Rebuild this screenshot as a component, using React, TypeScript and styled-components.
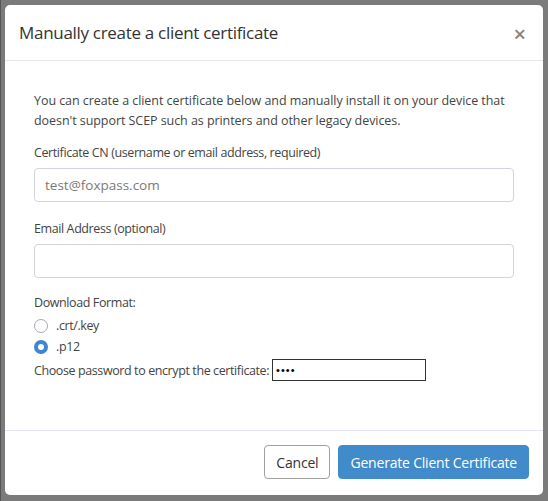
import styled, { createGlobalStyle } from 'styled-components';

const GlobalStyle = createGlobalStyle`
    html, body {
        margin: 0;
        padding: 0;
        background: #7b7b7b;
    }
    * {
        box-sizing: border-box;
    }
`;

const Backdrop = styled.div`
    width: 548px;
    height: 501px;
    padding: 5px 5px 6px 5px;
    background: #7b7b7b;
    border-left: 1px solid #555;
    font-family: 'Open Sans', 'Noto Sans', sans-serif;
    color: #444;
`;

const Modal = styled.div`
    width: 538px;
    height: 490px;
    margin-left: -1px;
    background: #fff;
    border-radius: 5px;
    display: flex;
    flex-direction: column;
`;

const Header = styled.div`
    height: 56px;
    display: flex;
    align-items: center;
    justify-content: space-between;
    padding: 0 17px 0 14px;
    border-bottom: 1px solid #e5e5ee;
`;

const Title = styled.h4`
    margin: 0;
    font-size: 17px;
    font-weight: 400;
    color: #333;
    letter-spacing: -0.3px;
`;

const Close = styled.button`
    border: 0;
    background: none;
    padding: 0;
    font-size: 22px;
    font-weight: 600;
    line-height: 1;
    color: #858585;
    font-family: 'Open Sans', sans-serif;
    cursor: pointer;
`;

const Body = styled.div`
    flex: 1;
    padding: 30px 29px 0 29px;
    font-size: 12.5px;
    letter-spacing: -0.4px;
`;

const Intro = styled.p`
    margin: 0 0 12px 0;
    line-height: 20px;
    letter-spacing: -0.06px;
`;

const Group = styled.div<{ gap?: number }>`
    margin-bottom: ${(p) => p.gap ?? 16}px;
`;

const Label = styled.label<{ gap?: number }>`
    display: block;
    line-height: 20px;
    margin-bottom: ${(p) => p.gap ?? 5}px;
`;

const TextInput = styled.input`
    display: block;
    width: 480px;
    height: 34px;
    border: 1px solid #d3d3e0;
    border-radius: 4px;
    padding: 0 10px;
    font-family: inherit;
    font-size: 13.5px;
    color: #555;
    &::placeholder {
        color: #7a7a7a;
    }
`;

const RadioRow = styled.label`
    display: flex;
    align-items: center;
    gap: 8px;
    height: 21px;
`;

const RadioDot = styled.span<{ checked?: boolean }>`
    width: 14px;
    height: 14px;
    border-radius: 50%;
    border: ${(p) => (p.checked ? '4px solid #3d86d0' : '1px solid #a9a9b4')};
    background: #fff;
`;

const PasswordRow = styled.div`
    display: flex;
    align-items: center;
    gap: 3px;
    margin-top: 2px;
`;

const PasswordInput = styled.input`
    width: 154px;
    height: 22px;
    border: 1px solid #333;
    padding: 0 3px;
    font-size: 11px;
    letter-spacing: 1px;
`;

const Footer = styled.div`
    height: 65px;
    border-top: 1px solid #e5e5ee;
    display: flex;
    align-items: center;
    justify-content: flex-end;
    gap: 8px;
    padding: 0 14px 2px 0;
`;

const Button = styled.button<{ primary?: boolean }>`
    height: 34px;
    padding: 0 11px;
    border-radius: 4px;
    font-family: inherit;
    font-size: 14px;
    letter-spacing: -0.2px;
    border: 1px solid ${(p) => (p.primary ? '#428bca' : '#a0a0a0')};
    background: ${(p) => (p.primary ? '#428bca' : '#fff')};
    color: ${(p) => (p.primary ? '#fff' : '#333')};
`;

export default function App() {
    return (
        <>
            <GlobalStyle />
            <Backdrop>
                <Modal>
                    <Header>
                        <Title>Manually create a client certificate</Title>
                        <Close>×</Close>
                    </Header>
                    <Body>
                        <Intro>
                            You can create a client certificate below and manually install it on your device that
                            doesn't support SCEP such as printers and other legacy devices.
                        </Intro>
                        <Group gap={17}>
                            <Label>Certificate CN (username or email address, required)</Label>
                            <TextInput placeholder="test@foxpass.com" />
                        </Group>
                        <Group gap={15}>
                            <Label>Email Address (optional)</Label>
                            <TextInput />
                        </Group>
                        <Label gap={2}>Download Format:</Label>
                        <RadioRow>
                            <RadioDot />
                            .crt/.key
                        </RadioRow>
                        <RadioRow>
                            <RadioDot checked />
                            .p12
                        </RadioRow>
                        <PasswordRow>
                            Choose password to encrypt the certificate:
                            <PasswordInput type="password" defaultValue="abcd" />
                        </PasswordRow>
                    </Body>
                    <Footer>
                        <Button>Cancel</Button>
                        <Button primary>Generate Client Certificate</Button>
                    </Footer>
                </Modal>
            </Backdrop>
        </>
    );
}
